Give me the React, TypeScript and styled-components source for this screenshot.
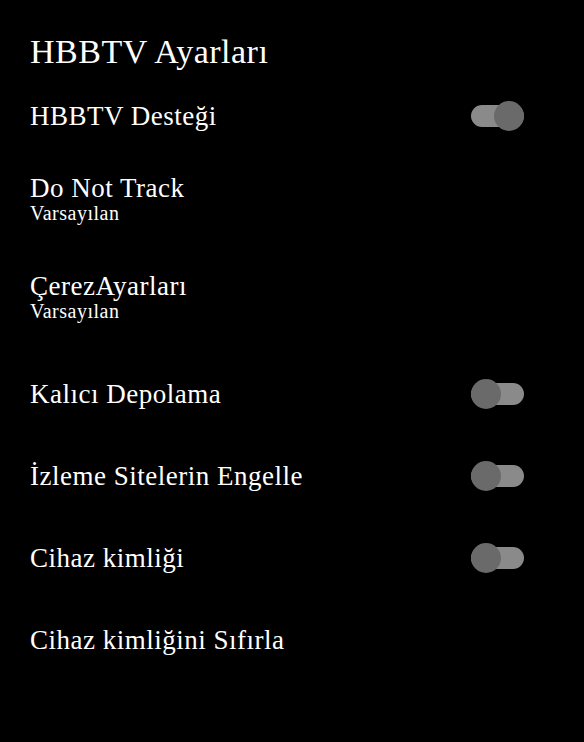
import React from "react";
import styled, { createGlobalStyle } from "styled-components";

const GlobalStyle = createGlobalStyle`
  html, body {
    margin: 0;
    padding: 0;
    background: #000;
  }
  body {
    font-family: "Liberation Serif", "Times New Roman", serif;
    color: #fff;
  }
`;

const Page = styled.div`
  width: 584px;
  min-height: 742px;
  box-sizing: border-box;
  padding: 33px 60px 0 30px;
  background: #000;
  display: flex;
  flex-direction: column;
`;

const Title = styled.h1`
  margin: 0 0 5px 0;
  font-size: 34px;
  line-height: 37px;
  letter-spacing: 0.5px;
  font-weight: normal;
  color: #fff;
`;

const List = styled.div`
  display: flex;
  flex-direction: column;
`;

const Row = styled.div<{ $double?: boolean }>`
  display: flex;
  justify-content: space-between;
  align-items: ${(p) => (p.$double ? "flex-start" : "center")};
  height: ${(p) => (p.$double ? "98px" : "82px")};
  box-sizing: border-box;
  padding-top: ${(p) => (p.$double ? "17px" : "0")};
`;

const Texts = styled.div`
  display: flex;
  flex-direction: column;
`;

const Label = styled.div`
  font-size: 27px;
  line-height: 29px;
  letter-spacing: 0.5px;
  color: #fff;
  white-space: nowrap;
`;

const Sub = styled.div`
  font-size: 20px;
  line-height: 21px;
  letter-spacing: 0.5px;
  color: #fff;
`;

const Track = styled.div<{ $on: boolean }>`
  width: 53px;
  height: 22px;
  border-radius: 11px;
  background: #8a8a8a;
  flex-shrink: 0;
  display: flex;
  align-items: center;
  justify-content: ${(p) => (p.$on ? "flex-end" : "flex-start")};
`;

const Knob = styled.div`
  width: 30px;
  height: 30px;
  border-radius: 50%;
  background: #6a6a6a;
  flex-shrink: 0;
`;

const Toggle = ({ on }: { on: boolean }) => (
  <Track $on={on}>
    <Knob />
  </Track>
);

type Item = { label: string; sub?: string; toggle?: boolean };

const items: Item[] = [
  { label: "HBBTV Desteği", toggle: true },
  { label: "Do Not Track", sub: "Varsayılan" },
  { label: "ÇerezAyarları", sub: "Varsayılan" },
  { label: "Kalıcı Depolama", toggle: false },
  { label: "İzleme Sitelerin Engelle", toggle: false },
  { label: "Cihaz kimliği", toggle: false },
  { label: "Cihaz kimliğini Sıfırla" },
];

export default function App() {
  return (
    <>
      <GlobalStyle />
      <Page>
        <Title>HBBTV Ayarları</Title>
        <List>
          {items.map((it) => (
            <Row key={it.label} $double={!!it.sub}>
              <Texts>
                <Label>{it.label}</Label>
                {it.sub && <Sub>{it.sub}</Sub>}
              </Texts>
              {it.toggle !== undefined && <Toggle on={it.toggle} />}
            </Row>
          ))}
        </List>
      </Page>
    </>
  );
}
